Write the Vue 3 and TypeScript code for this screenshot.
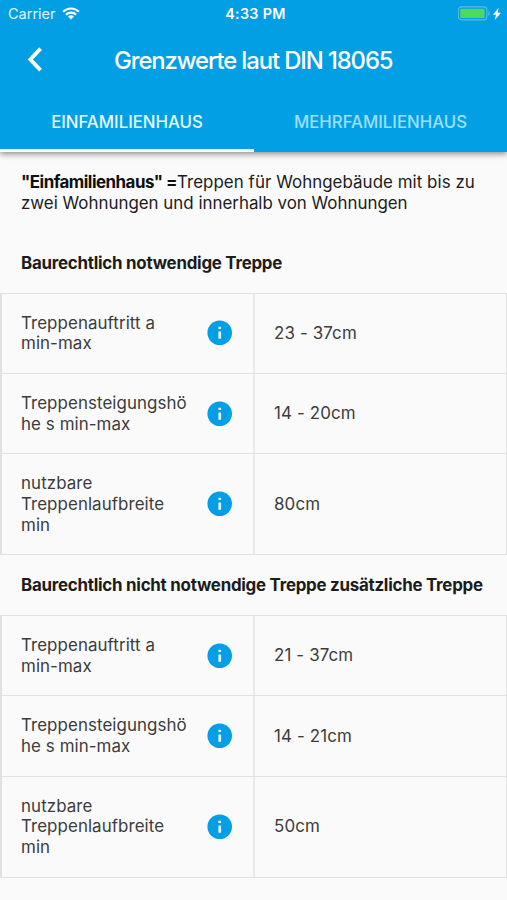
<script setup lang="ts">
import { ref } from 'vue'

interface Limit {
  lines: string[]
  value: string
}

interface Section {
  title: string
  limits: Limit[]
}

const tabs: string[] = ['EINFAMILIENHAUS', 'MEHRFAMILIENHAUS']
const activeTab = ref<number>(0)

const makeLimits = (tread: string, rise: string, width: string): Limit[] => [
  { lines: ['Treppenauftritt a', 'min-max'], value: tread },
  { lines: ['Treppensteigungshö', 'he s min-max'], value: rise },
  { lines: ['nutzbare', 'Treppenlaufbreite', 'min'], value: width },
]

const sections: Section[] = [
  { title: 'Baurechtlich notwendige Treppe', limits: makeLimits('23 - 37cm', '14 - 20cm', '80cm') },
  {
    title: 'Baurechtlich nicht notwendige Treppe zusätzliche Treppe',
    limits: makeLimits('21 - 37cm', '14 - 21cm', '50cm'),
  },
]
</script>

<template>
  <div class="screen">
    <header class="app-bar">
      <div class="status">
        <div class="status-left">
          <span class="carrier">Carrier</span>
          <svg class="wifi" width="18" height="13" viewBox="0 0 18 13">
            <g fill="none" stroke="#fff" stroke-width="2.1">
              <path d="M1.1 4.7a11.2 11.2 0 0 1 15.8 0" />
              <path d="M3.9 7.7a7.2 7.2 0 0 1 10.2 0" />
            </g>
            <path d="M6 9.6a4.3 4.3 0 0 1 6 0L9 12.6z" fill="#fff" />
          </svg>
        </div>
        <span class="clock">4:33 PM</span>
        <div class="status-right">
          <svg width="44" height="16" viewBox="0 0 44 16">
            <rect x="0.4" y="0.9" width="28.4" height="13" rx="3.2" fill="none" stroke="#5fb8ec" stroke-width="1.1" />
            <rect x="2.2" y="2.7" width="24.4" height="9.4" rx="1.2" fill="#4cd964" />
            <path d="M30.2 5.3c2 .5 2 3.9 0 4.4z" fill="#5fb8ec" />
            <path d="M40.6 1.8 35 8.7h3L36.8 14l6.2-7.3h-3.3z" fill="#fff" />
          </svg>
        </div>
      </div>
      <div class="title-row">
        <button class="back" aria-label="Zurück">
          <svg width="16" height="26" viewBox="0 0 16 26">
            <path d="M13.6 1.6 3.3 12.5l10.3 10.6" fill="none" stroke="#fff" stroke-width="3.8" />
          </svg>
        </button>
        <h1>Grenzwerte laut DIN 18065</h1>
      </div>
      <nav class="tabs">
        <button
          v-for="(tab, index) in tabs"
          :key="tab"
          class="tab"
          :class="{ active: index === activeTab }"
          @click="activeTab = index"
        >
          <span>{{ tab }}</span>
        </button>
      </nav>
    </header>

    <main>
      <p class="intro">
        <span class="line first"><strong>"Einfamilienhaus" =</strong>Treppen für Wohngebäude mit bis zu</span>
        <span class="line">zwei Wohnungen und innerhalb von Wohnungen</span>
      </p>
      <section v-for="(section, s) in sections" :key="s">
        <h2><span>{{ section.title }}</span></h2>
        <div class="table">
          <div v-for="limit in section.limits" :key="limit.value" class="row">
            <div class="cell name">
              <div class="label">
                <span v-for="line in limit.lines" :key="line" class="line">{{ line }}</span>
              </div>
              <svg class="info" width="26" height="26" viewBox="0 0 26 26">
                <circle cx="12.7" cy="12.7" r="12.3" fill="#039fe5" />
                <rect x="11.4" y="6.7" width="2.7" height="2.4" rx="0.4" fill="#e6f6ff" />
                <rect x="11.4" y="11.4" width="2.7" height="7.4" rx="0.3" fill="#e6f6ff" />
              </svg>
            </div>
            <div class="cell value"><span>{{ limit.value }}</span></div>
          </div>
        </div>
      </section>
    </main>
  </div>
</template>

<style>
body {
  background: #fafafa;
}
</style>

<style scoped>
.screen {
  width: 507px;
  height: 900px;
  overflow: hidden;
  box-sizing: border-box;
  background: #fafafa;
  font-family: Inter, 'Liberation Sans', sans-serif;
  color: #3c3c3c;
}
button {
  padding: 0;
  border: 0;
  background: none;
  font: inherit;
}
.app-bar {
  position: relative;
  height: 152px;
  background: #039fe5;
  color: #fff;
  box-shadow: 0 2px 6px rgba(0, 0, 0, 0.45);
}
.status {
  display: grid;
  grid-template-columns: 1fr auto 1fr;
  align-items: center;
  height: 27px;
  padding: 0 5px 0 8px;
  font-size: 14.5px;
}
.status-left {
  display: flex;
  align-items: center;
  gap: 6px;
}
.carrier {
  color: #e2f4ff;
}
.clock {
  padding-left: 1px;
  font-weight: 600;
  font-size: 14.3px;
  letter-spacing: 0.35px;
}
.status-right {
  display: flex;
  justify-content: flex-end;
}
.status-right svg,
.back svg,
.info {
  display: block;
}
.title-row {
  display: flex;
  align-items: center;
  height: 66px;
}
.back {
  margin-left: 27px;
}
h1 {
  margin: 0 0 0 71px;
  font-size: 23.8px;
  font-weight: 500;
  letter-spacing: -1.08px;
  white-space: nowrap;
}
.tabs {
  display: grid;
  grid-template-columns: 254px 253px;
  height: 59px;
}
.tab {
  padding-top: 2px;
  border-bottom: 3px solid transparent;
  color: #9be0ff;
  font-size: 16.8px;
  font-weight: 500;
}
.tab.active {
  border-color: #fff;
  color: #e9fbff;
}
.line {
  display: block;
  white-space: nowrap;
}
.intro {
  margin: 0;
  padding: 20px 20px 19.6px 21px;
  font-size: 16.9px;
  line-height: 20.7px;
  color: #1c1c1c;
}
.first {
  letter-spacing: 0.05px;
}
.intro strong {
  font-weight: 700;
  letter-spacing: -0.5px;
  color: #101010;
}
h2 {
  display: flex;
  align-items: center;
  height: 59.8px;
  margin: 0;
  padding: 0 0 0 21px;
  font-size: 16.9px;
  font-weight: 700;
  letter-spacing: -0.25px;
  white-space: nowrap;
  color: #1c1c1c;
}
.table {
  border: 1px solid #e1e1e1;
  border-width: 1px 1px 1px 2px;
}
.row {
  display: grid;
  grid-template-columns: 251px 1fr;
  font-size: 16.9px;
  line-height: 20.7px;
}
.row + .row {
  border-top: 1px solid #e1e1e1;
}
.cell {
  display: flex;
  align-items: center;
}
.name {
  justify-content: space-between;
  padding: 18.8px 20px 19.1px 19px;
}
.label {
  letter-spacing: 0.08px;
}
.value {
  border-left: 2px solid #e9e9e9;
  padding-left: 19px;
  letter-spacing: 0.14px;
}
</style>
